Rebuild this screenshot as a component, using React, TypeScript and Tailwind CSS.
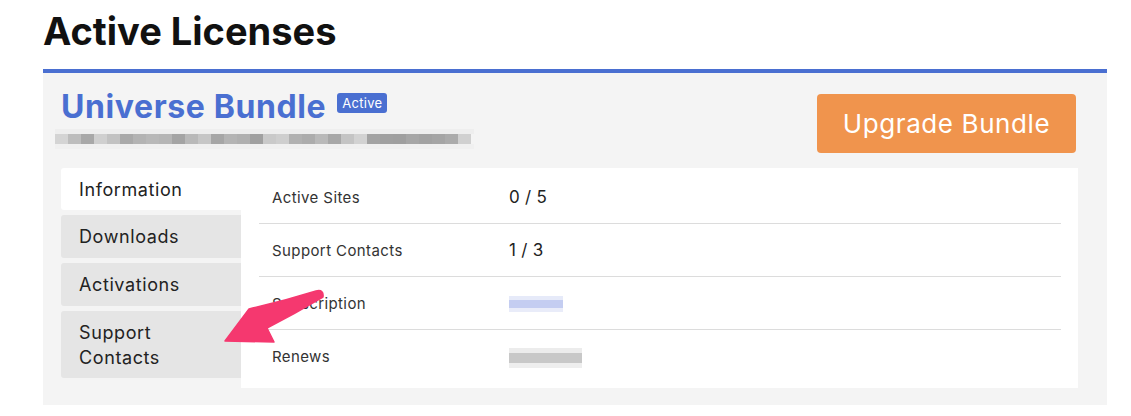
import React from 'react';

const tabs = [
  { label: 'Information', active: true },
  { label: 'Downloads', active: false },
  { label: 'Activations', active: false },
  { label: 'Support Contacts', active: false, wrap: true },
];

// pixelated (blurred-out) license key
const keyShades = [
  '#d4d4d4', '#bdbdbd', '#a8a8a8', '#cfcfcf', '#c2c2c2', '#a9a9a9', '#b3b3b3', '#b8b8b8',
  '#b5b5b5', '#a4a4a4', '#b9b9b9', '#c6c6c6', '#a6a6a6', '#b4b4b4', '#b0b0b0', '#a0a0a0',
  '#c9c9c9', '#cecece', '#b1b1b1', '#acacac', '#b9b9b9', '#a7a7a7', '#c4c4c4', '#d2d2d2',
  '#a3a3a3', '#a0a0a0', '#9f9f9f', '#a6a6a6', '#a2a2a2', '#a5a5a5', '#ababab', '#d0d0d0',
];

const Arrow: React.FC = () => (
  <svg className="absolute left-[200px] top-[280px]" width="140" height="80" viewBox="0 0 140 80">
    <path
      d="M25 61 L49 29 Q84 21 116 11 Q124 9 123 17 Q96 33 67 48 L74 62 Z"
      fill="#f5386f"
      stroke="#f5386f"
      strokeWidth="1.5"
      strokeLinejoin="round"
    />
  </svg>
);

const Row: React.FC<{ label: string; last?: boolean; children: React.ReactNode }> = ({ label, last, children }) => (
  <div className={`flex h-[53px] items-center pt-[2px] ${last ? '' : 'border-b border-[#dcdcdc]'}`}>
    <div className="w-[250px] pl-[13px] text-[15px] tracking-[0.4px] text-[#333]">{label}</div>
    <div className="text-[17px] tracking-[0.3px] text-[#222]">{children}</div>
  </div>
);

const App: React.FC = () => {
  return (
    <div className="relative min-h-[416px] bg-white pl-[43px] pr-[24px] font-['Inter',sans-serif]">
      <h1 className="pt-[4px] text-[38px] font-bold leading-[54px] text-[#111]">Active Licenses</h1>

      <div className="mt-[11px] border-t-4 border-[#4a6fd1] bg-[#f4f4f4] pb-[17px] pl-[18px] pr-[29px] pt-[21px]">
        <div className="flex items-start justify-between">
          <div>
            <div className="flex items-start gap-[11px]">
              <span className="text-[32px] font-bold leading-[26px] tracking-[0.6px] text-[#4a6fd1]">Universe Bundle</span>
              <span className="mt-[-1px] rounded-[3px] bg-[#4a6fd1] px-[5px] text-[13px] leading-[20px] tracking-[0.3px] text-white">
                Active
              </span>
            </div>
            <div className="ml-[-6px] mt-[9px] flex h-[20px] flex-col">
              <div className="h-[5px] w-[419px] bg-[#eeeeee]" />
              <div className="flex h-[10px]">
                {keyShades.map((c, i) => (
                  <div key={i} className="h-full w-[13px]" style={{ backgroundColor: c }} />
                ))}
              </div>
              <div className="h-[5px] w-[419px] bg-[#f0f0f0]" />
            </div>
          </div>
          <button className="mr-[2px] h-[59px] w-[259px] rounded-[4px] bg-[#f0944d] text-[26px] tracking-[0.6px] text-white">
            Upgrade Bundle
          </button>
        </div>

        <div className="mt-[15px] flex">
          <div className="flex w-[180px] flex-col gap-[5px]">
            {tabs.map(t => (
              <div
                key={t.label}
                className={`flex items-center rounded-l-[3px] pl-[18px] pr-[10px] text-[18px] leading-[25px] tracking-[0.6px] text-[#222] ${
                  t.active ? 'h-[42px] bg-white' : 'bg-[#e5e5e5]'
                } ${t.wrap ? 'h-[67px]' : t.active ? '' : 'h-[43px]'}`}
              >
                {t.wrap ? (
                  <span>
                    Support
                    <br />
                    Contacts
                  </span>
                ) : (
                  t.label
                )}
              </div>
            ))}
          </div>

          <div className="h-[220px] flex-1 bg-white pb-[5px] pl-[18px] pr-[17px] pt-[3px]">
            <Row label="Active Sites">0 / 5</Row>
            <Row label="Support Contacts">1 / 3</Row>
            <Row label="Subscription">
              <div className="flex h-[16px] w-[54px] flex-col">
                <div className="h-[4px] bg-[#e6eaf9]" />
                <div className="h-[8px] bg-[#c4cdf1]" />
                <div className="h-[4px] bg-[#e9ecf9]" />
              </div>
            </Row>
            <Row label="Renews" last>
              <div className="flex h-[20px] w-[73px] flex-col">
                <div className="h-[5px] bg-[#ececec]" />
                <div className="h-[10px] bg-[#c8c8c8]" />
                <div className="h-[5px] bg-[#eeeeee]" />
              </div>
            </Row>
          </div>
        </div>
      </div>

      <Arrow />
    </div>
  );
};

export default App;
